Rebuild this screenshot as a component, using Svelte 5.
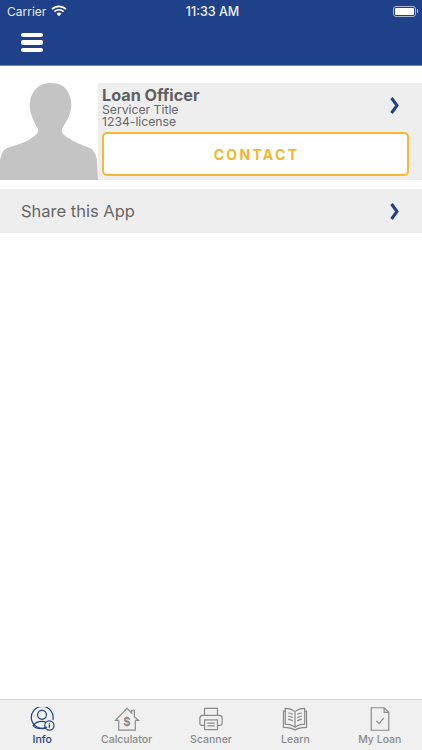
<script>
  const tabs = [
    { id: 'info', label: 'Info' },
    { id: 'calc', label: 'Calculator' },
    { id: 'scan', label: 'Scanner' },
    { id: 'learn', label: 'Learn' },
    { id: 'loan', label: 'My Loan' }
  ];
  let active = 'info';
</script>

<div class="page">
  <header>
    <div class="status">
      <div class="carrier">
        <span>Carrier</span>
        <svg width="16" height="12" viewBox="0 0 16 12">
          <path d="M1 4.200a10 10 0 0 1 14 0" fill="none" stroke="#fff" stroke-width="1.700"/>
          <path d="M3.400 6.600a6.600 6.600 0 0 1 9.200 0" fill="none" stroke="#fff" stroke-width="1.700"/>
          <path d="M5.600 8.800a3.400 3.400 0 0 1 4.800 0L8 11.300z" fill="#fff"/>
        </svg>
      </div>
      <div class="time">11:33 AM</div>
      <div class="battery">
        <div class="cell"><div class="level"></div></div>
        <div class="nub"></div>
      </div>
    </div>
    <div class="navbar">
      <button class="burger" aria-label="Menu"><i></i><i></i><i></i></button>
    </div>
  </header>

  <main>
    <section class="officer">
      <svg class="photo" viewBox="0 0 98 97" preserveAspectRatio="none">
        <path fill="#c4c4c4" d="M50 0C59 0 65 3 68 9C71 15 72 21 71 26C70 33 66 39 63 44C61.500 47 61.500 49 63 51C67 55 76 60 90 65C94 67 96 72 97 77L98 97H0V77C1 72 3 67 7 65C17 62 27 59 33 54C37 51 39 49 38 46C35 41 31 33 30 26C29 19 31 12 35 7C39 2 44 0 50 0Z"/>
      </svg>
      <div class="details">
        <div class="top">
          <div class="text">
            <h2>Loan Officer</h2>
            <p>Servicer Title</p>
            <p>1234-license</p>
          </div>
          <svg class="chev" width="11" height="17" viewBox="0 0 11 17"><path d="M2.500 1l5.500 7.500-5.500 7.500" fill="none" stroke="#1f4189" stroke-width="3"/></svg>
        </div>
        <button class="contact">CONTACT</button>
      </div>
    </section>

    <section class="share">
      <span>Share this App</span>
      <svg class="chev" width="11" height="17" viewBox="0 0 11 17"><path d="M2.500 1l5.500 7.500-5.500 7.500" fill="none" stroke="#1f4189" stroke-width="3"/></svg>
    </section>
  </main>

  <nav>
    {#each tabs as tab}
      <div class="tab" class:active={active === tab.id}>
        <svg width="26" height="24" viewBox="0 0 28 26" fill="none" stroke="currentColor" stroke-width="1.300">
          {#if tab.id === 'info'}
            <path d="M19.500 21.800A11.800 11.800 0 1 1 25.700 14"/>
            <circle cx="14" cy="8.500" r="4.800"/>
            <path d="M18.500 16.500c-1.500-.7-3-1-4.500-1-4 0-7.500 1.500-9.500 4.500.5 2 4.500 3.500 9.500 3.500 1.500 0 3-.2 4.500-.5"/>
            <circle cx="22" cy="20" r="5"/>
            <path d="M22 19v3.500M22 17.200v.9" stroke-width="1.400"/>
          {:else if tab.id === 'calc'}
            <path d="M5 14.500H1.500L14 1.500l5 5V3.500h3v7l4.500 4H23"/>
            <path d="M5 14.500V25h18V14.500"/>
            <text x="14" y="20.500" text-anchor="middle" class="dollar">$</text>
          {:else if tab.id === 'scan'}
            <path d="M7 9V1.500h14V9"/>
            <path d="M7 20H4a2 2 0 0 1-2-2v-6a3 3 0 0 1 3-3h18a3 3 0 0 1 3 3v6a2 2 0 0 1-2 2h-3"/>
            <rect x="7" y="14" width="14" height="10.500"/>
            <path d="M10 17.500h8M10 20.500h8"/>
          {:else if tab.id === 'learn'}
            <path d="M14 5C11 2.500 7 1.500 3.500 1.500v17c4 0 7.500 1 10.500 3.500 3-2.500 6.500-3.500 10.500-3.500v-17C21 1.500 17 2.500 14 5zM14 5v17"/>
            <path d="M3.500 4.500H1.500V22c4.500 0 9 .5 12.500 3 3.500-2.500 8-3 12.500-3V4.500h-2"/>
            <path d="M6.500 6.500c1.500 0 3 .5 5 1.500M6.500 10c1.500 0 3 .5 5 1.500M6.500 13.500c1.500 0 3 .5 5 1.500M21.500 6.500c-1.500 0-3 .5-5 1.500M21.500 10c-1.500 0-3 .5-5 1.500M21.500 13.500c-1.500 0-3 .5-5 1.500"/>
          {:else}
            <path d="M4.500 .8h14l5 5V25.200h-19z"/>
            <path d="M18.500 .8v5h5"/>
            <path d="M10 15l3 3 5-6"/>
          {/if}
        </svg>
        <span>{tab.label}</span>
      </div>
    {/each}
  </nav>
</div>

<style>
  :global(body) {
    margin: 0;
    background: #fff;
  }

  .page {
    width: 422px;
    height: 750px;
    display: flex;
    flex-direction: column;
    font-family: Inter, "Liberation Sans", sans-serif;
    overflow: hidden;
  }

  header {
    background: #1f4189;
    height: 65px;
    border-bottom: 1px solid #6f87b6;
    color: #fff;
    flex: none;
  }

  .status {
    height: 22px;
    display: grid;
    grid-template-columns: 1fr auto 1fr;
    align-items: center;
    padding: 0 4px 0 7px;
    font-size: 12px;
    color: #e6ebf4;
  }

  .carrier {
    display: flex;
    align-items: center;
    gap: 5px;
  }

  .time {
    font-size: 12.500px;
    font-weight: 500;
    color: #f2f4f9;
  }

  .battery {
    justify-self: end;
    display: flex;
    align-items: center;
    gap: 1px;
  }

  .cell {
    width: 23px;
    height: 11px;
    box-sizing: border-box;
    border: 1px solid #a9b7d3;
    border-radius: 3px;
    padding: 1px;
  }

  .level {
    height: 100%;
    background: #fff;
    border-radius: 1px;
  }

  .nub {
    width: 1px;
    height: 4px;
    background: #a9b7d3;
  }

  .navbar {
    padding: 11px 0 0 21px;
  }

  .burger {
    display: flex;
    flex-direction: column;
    gap: 3px;
    padding: 0;
    border: none;
    background: none;
  }

  .burger i {
    display: block;
    width: 22px;
    height: 4.300px;
    background: #fff;
    border-radius: 2px;
  }

  main {
    flex: 1;
    padding-top: 17px;
  }

  .officer {
    display: flex;
    height: 97px;
  }

  .photo {
    width: 98px;
    height: 97px;
    flex: none;
  }

  .details {
    flex: 1;
    background: #eeeeee;
    padding: 4px 13px 4px 4px;
    display: flex;
    flex-direction: column;
  }

  .top {
    display: flex;
    justify-content: space-between;
    align-items: flex-start;
    height: 45px;
  }

  .top .chev {
    margin: 10px 9px 0 0;
  }

  h2 {
    margin: 0 0 1px;
    font-size: 16.200px;
    line-height: 16px;
    font-weight: 700;
    color: #5f5f5f;
  }

  p {
    margin: 0;
    font-size: 12.200px;
    line-height: 12px;
    color: #666;
  }

  .contact {
    height: 44px;
    background: #fff;
    border: 2px solid #f6b92f;
    border-radius: 5px;
    color: #f4b62e;
    font-family: inherit;
    font-size: 14px;
    font-weight: 700;
    letter-spacing: 2.300px;
    padding: 0 0 0 2px;
  }

  .share {
    margin-top: 9px;
    height: 44px;
    background: #eeeeee;
    display: flex;
    align-items: center;
    justify-content: space-between;
    padding: 0 22px 0 21px;
    font-size: 16.500px;
    color: #666;
  }

  nav {
    flex: none;
    height: 50px;
    background: #f0f0f0;
    border-top: 1px solid #d8d8d8;
    display: grid;
    grid-template-columns: repeat(5, 1fr);
  }

  .tab {
    display: flex;
    flex-direction: column;
    align-items: center;
    padding-top: 7px;
    color: #8a8a8a;
    font-size: 10.500px;
    line-height: 12px;
    font-weight: 500;
  }

  .tab svg {
    margin-bottom: 3px;
  }

  .tab.active {
    color: #1f4189;
  }

  .dollar {
    font-size: 12px;
    font-weight: 700;
    fill: currentColor;
    stroke: none;
  }
</style>
